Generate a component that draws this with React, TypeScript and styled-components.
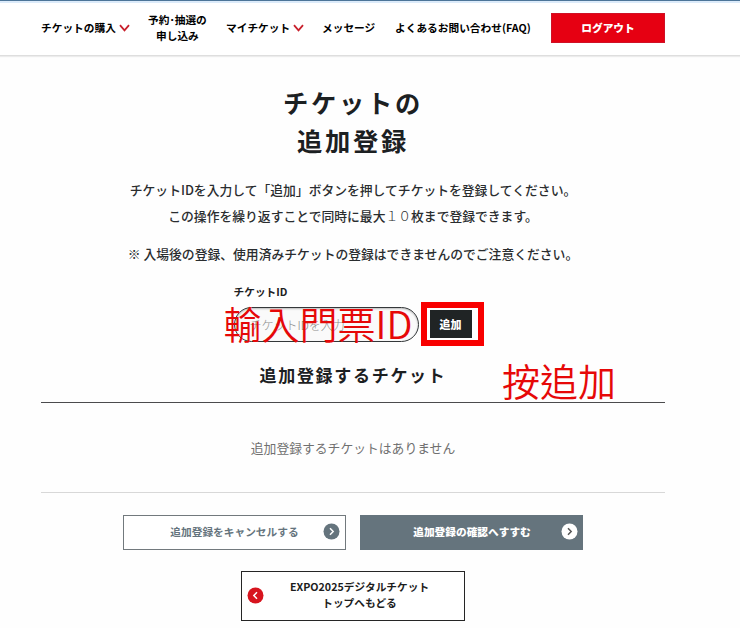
import React from 'react';
import styled, { createGlobalStyle } from 'styled-components';

const GlobalStyle = createGlobalStyle`
  * { box-sizing: border-box; }
  body {
    margin: 0;
    background: #fefefe;
    color: #1c2022;
    font-family: "Noto Sans CJK JP", sans-serif;
    overflow: hidden;
  }
  p, h1, h2 { margin: 0; }
  button, input { font-family: inherit; margin: 0; }
`;

const Page = styled.div`
  width: 740px;
  height: 628px;
  overflow: hidden;
  border-top: 1px solid #4c7598;
`;

const Header = styled.header`
  height: 55px;
  padding: 0 0 3px 41px;
  display: flex;
  align-items: center;
  border-top: 2px solid #dcebfa;
  border-bottom: 1px solid #dedede;
  box-shadow: 0 1px 1px #ececec;
  background: #fff;
`;

const NavItem = styled.a<{ $width: number; $gap: number }>`
  flex: none;
  display: flex;
  align-items: center;
  justify-content: space-between;
  width: ${(p) => p.$width}px;
  margin-right: ${(p) => p.$gap}px;
  font-size: 10.7px;
  line-height: 16px;
  font-weight: 700;
  color: #000;
  white-space: nowrap;
  text-align: center;
`;

const Logout = styled.button`
  width: 114px;
  height: 30px;
  padding: 0;
  border: 1px solid #cf1126;
  background: #e60012;
  color: #fff;
  font-size: 10.7px;
  font-weight: 900;
`;

const Main = styled.main`
  width: 624px;
  margin-left: 41px;
  display: flex;
  flex-direction: column;
  align-items: center;
`;

const Title = styled.h1`
  margin-top: 27px;
  font-size: 25.3px;
  line-height: 38px;
  letter-spacing: 2.7px;
  font-weight: 700;
  text-align: center;
`;

const Copy = styled.p<{ $top: number }>`
  margin-top: ${(p) => p.$top}px;
  font-size: 12.8px;
  line-height: 26px;
  font-weight: 500;
  color: #2a2d2f;
  white-space: nowrap;
  text-align: center;
`;

const WideDigits = styled.span`
  font-weight: 300;
`;

const Form = styled.form`
  width: 250px;
  height: 64px;
  margin: 16px 0 0 11px;
  display: grid;
  grid-template-columns: 185px 63px;
  grid-template-rows: 19px 44px;
  column-gap: 2px;
  position: relative;
`;

const Label = styled.label`
  grid-column: 1 / 3;
  font-size: 10.7px;
  line-height: 17px;
  font-weight: 700;
`;

const Field = styled.input`
  width: 185px;
  height: 35px;
  margin-top: 5px;
  padding: 0 15px;
  border: 1px solid #34383a;
  border-radius: 18px;
  background: #fafafa;
  box-shadow: inset 0 1px 2px #bbb;
  font-size: 12px;
  outline: none;
  &::placeholder { color: #8c8c8c; opacity: 1; font-weight: 300; }
`;

const AddFrame = styled.div`
  width: 63px;
  height: 44px;
  padding: 2px 5px 2px 2px;
  border: 6px solid #f80000;
`;

const AddButton = styled.button`
  display: block;
  width: 42px;
  height: 28px;
  margin: 0 auto;
  padding: 0;
  border: 0;
  background: #202425;
  color: #fff;
  font-size: 11px;
  font-weight: 900;
`;

const Note = styled.span<{ $left: number; $top: number; $spacing?: number }>`
  position: absolute;
  left: ${(p) => p.$left}px;
  top: ${(p) => p.$top}px;
  font-family: "Noto Sans CJK TC", sans-serif;
  font-size: 38px;
  line-height: 44px;
  font-weight: 350;
  letter-spacing: ${(p) => p.$spacing ?? 0}px;
  color: #e60808;
  white-space: nowrap;
  pointer-events: none;
`;

const ListHeading = styled.h2`
  position: relative;
  width: 624px;
  height: 56px;
  padding: 11px 0 0 0;
  border-bottom: 1px solid #4b4b4d;
  font-size: 17px;
  line-height: 34px;
  letter-spacing: 1.7px;
  font-weight: 700;
  text-align: center;
`;

const Empty = styled.p`
  width: 624px;
  height: 90px;
  border-bottom: 1px solid #d8d8d8;
  font-size: 12.8px;
  line-height: 89px;
  color: #707070;
  text-align: center;
`;

const Actions = styled.div`
  display: flex;
  gap: 14px;
  margin-top: 22px;
`;

const Action = styled.button<{ $filled?: boolean }>`
  width: 223px;
  height: 35px;
  padding: 0 ${(p) => (p.$filled ? 4 : 5)}px 2px 22px;
  display: flex;
  align-items: center;
  border: 1px solid ${(p) => (p.$filled ? '#65747d' : '#72797d')};
  background: ${(p) => (p.$filled ? '#65747d' : '#fff')};
  color: ${(p) => (p.$filled ? '#fff' : '#65747d')};
  font-size: 10.7px;
  font-weight: ${(p) => (p.$filled ? 900 : 700)};
  white-space: nowrap;
`;

const ActionText = styled.span`
  flex: 1;
`;

const BackButton = styled.button`
  width: 224px;
  height: 50px;
  margin-top: 21px;
  padding: 0 9px 2px 5px;
  display: flex;
  align-items: center;
  border: 1px solid #252525;
  background: #fff;
  color: #1c1c1c;
  font-size: 10.7px;
  line-height: 16px;
  font-weight: 700;
`;

const Chevron = () => (
  <svg width="11" height="8" viewBox="0 0 11 8" fill="none">
    <path d="M1 1.2 5.5 6.3 10 1.2" stroke="#c8202c" strokeWidth="1.8" />
  </svg>
);

const RoundArrow = ({ fill, stroke, back }: { fill: string; stroke: string; back?: boolean }) => (
  <svg width="17" height="17" viewBox="0 0 17 17" fill="none">
    <circle cx="8.5" cy="8.5" r="8" fill={fill} />
    <path d={back ? 'M10 5.2 6.8 8.5 10 11.8' : 'M7 5.2 10.2 8.5 7 11.8'} stroke={stroke} strokeWidth="1.5" />
  </svg>
);

export default function App() {
  return (
    <>
      <GlobalStyle />
      <Page>
        <Header>
          <NavItem $width={89} $gap={18}>チケットの購入<Chevron /></NavItem>
          <NavItem $width={58} $gap={20}><span>予約･抽選の<br />申し込み</span></NavItem>
          <NavItem $width={78} $gap={18}>マイチケット<Chevron /></NavItem>
          <NavItem $width={54} $gap={19}>メッセージ</NavItem>
          <NavItem $width={137} $gap={19}>よくあるお問い合わせ(FAQ)</NavItem>
          <Logout>ログアウト</Logout>
        </Header>
        <Main>
          <Title>チケットの<br />追加登録</Title>
          <Copy $top={18}>チケットIDを入力して「追加」ボタンを押してチケットを登録してください。</Copy>
          <Copy $top={0}>この操作を繰り返すことで同時に最大<WideDigits>１０</WideDigits>枚まで登録できます。</Copy>
          <Copy $top={12}>※ 入場後の登録、使用済みチケットの登録はできませんのでご注意ください。</Copy>
          <Form onSubmit={(e) => e.preventDefault()}>
            <Label htmlFor="ticket-id">チケットID</Label>
            <Field id="ticket-id" placeholder="チケットIDを入力" />
            <AddFrame><AddButton>追加</AddButton></AddFrame>
            <Note $left={-10} $top={18}>輸入門票ID</Note>
          </Form>
          <ListHeading>
            追加登録するチケット
            <Note $left={461} $top={11}>按追加</Note>
          </ListHeading>
          <Empty>追加登録するチケットはありません</Empty>
          <Actions>
            <Action><ActionText>追加登録をキャンセルする</ActionText><RoundArrow fill="#65747d" stroke="#fff" /></Action>
            <Action $filled><ActionText>追加登録の確認へすすむ</ActionText><RoundArrow fill="#fff" stroke="#555" /></Action>
          </Actions>
          <BackButton>
            <RoundArrow fill="#d7141e" stroke="#fff" back />
            <ActionText>EXPO2025デジタルチケット<br />トップへもどる</ActionText>
          </BackButton>
        </Main>
      </Page>
    </>
  );
}
